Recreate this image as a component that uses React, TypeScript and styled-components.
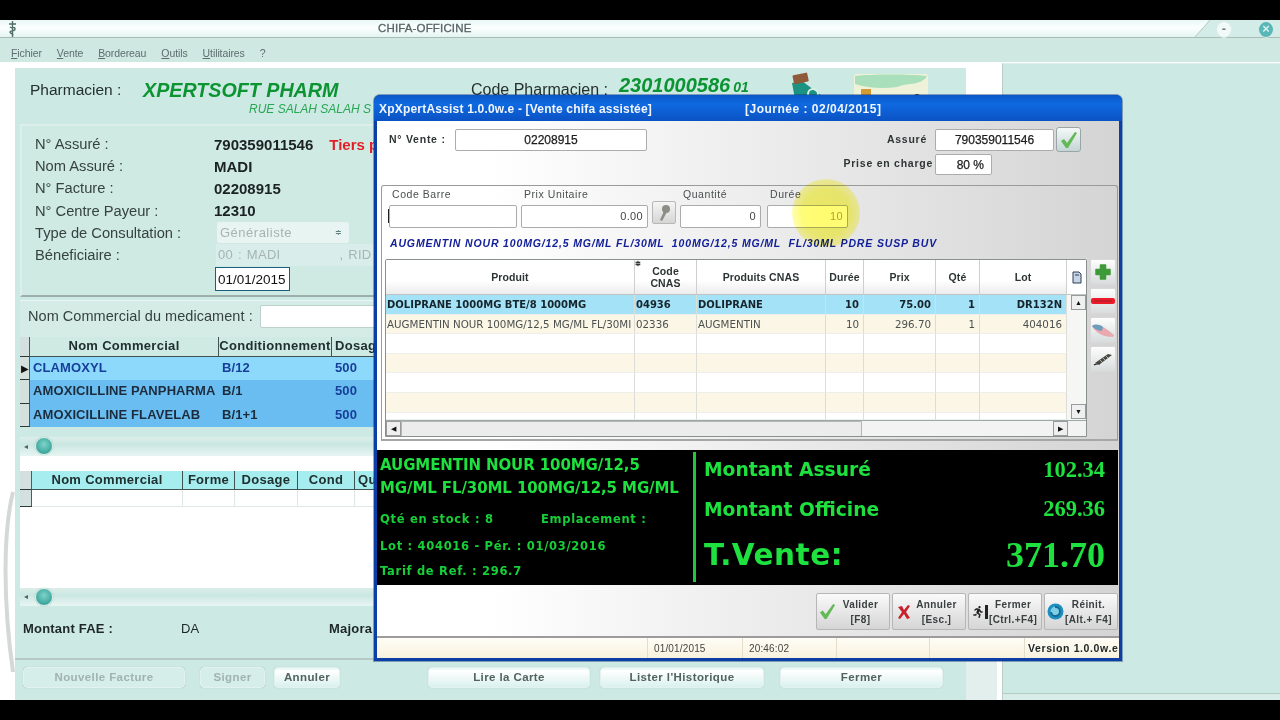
import React from "react";
import styled, { createGlobalStyle } from "styled-components";
import { FaRunning } from "react-icons/fa";

const Global = createGlobalStyle`
  html, body { margin: 0; padding: 0; background: #000; }
  body { width: 1280px; height: 720px; overflow: hidden; font-family: "Liberation Sans", Arial, sans-serif; }
  #root { width: 1280px; height: 720px; }
`;

const Screen = styled.div`
  width: 1280px; height: 720px; background: #000; padding: 20px 0; box-sizing: border-box;
  position: relative; overflow: hidden; filter: blur(0.35px);
`;
const AppWindow = styled.div`
  height: 680px; display: flex; flex-direction: column; background: #cde9e4;
`;
const TitleBar = styled.div`
  height: 18px; flex: none; display: flex; align-items: center; position: relative; box-sizing: border-box;
  background: linear-gradient(#eaf8f5, #fbfffe 45%, #e4f5f1);
  border-bottom: 1px solid #a9bcb8; padding-left: 8px;
`;
const AppTitle = styled.div`
  position: absolute; left: 378px; top: 2px; font-size: 11.5px; letter-spacing: 0.15px; color: #566464; font-weight: 400;
  -webkit-text-stroke: 0.3px #566464;
`;
const TitleCorner = styled.svg`position: absolute; right: 0; top: 0;`;
const WinControl = styled.div<{ $left: number; $tone: string; $ink: string }>`
  position: absolute; left: ${(p) => p.$left}px; top: 1px; width: 16px; height: 17px; border-radius: 50%;
  background: ${(p) => p.$tone}; border: 1px solid #d9ece8; box-sizing: border-box; color: ${(p) => p.$ink};
  font: 700 13px/14px "Liberation Sans", sans-serif; text-align: center;
`;
const MenuBar = styled.div`
  height: 24px; flex: none; display: flex; gap: 15px; align-items: center; padding: 6px 0 0 11px; box-sizing: border-box;
  background: #cfe8e2;
`;
const MenuItem = styled.span`
  font-size: 10.5px; color: #5e6d70; letter-spacing: -0.1px;
  &::first-letter { text-decoration: underline; }
`;
const Workspace = styled.div`
  flex: 1; display: flex; background: #fff; min-height: 0; position: relative;
`;
const LeftGutter = styled.div`width: 15px; flex: none; background: #fff; position: relative;`;
const Sweep = styled.svg`position: absolute; left: 0; top: 420px;`;
const MainColumn = styled.div`
  width: 951px; flex: none; padding-top: 6px; display: flex; flex-direction: column; box-sizing: border-box;
  background: linear-gradient(#fff 6px, #cde9e4 6px);
`;
const MidGutter = styled.div`
  width: 36px; flex: none; box-sizing: border-box; border-right: 5px solid #fff;
  background: linear-gradient(#fff 596px, #e2efec 596px);
`;
const RightPanel = styled.div`
  flex: 1; border-left: 1px solid #b9cdc9; border-top: 1px solid #dcefeb; margin-top: 1px;
  background: linear-gradient(#cde9e4 629px, #b5c9c5 629px, #b5c9c5 630px, #d8ede8 630px);
`;
const PharmHeader = styled.div`
  height: 56px; flex: none; display: flex; position: relative; padding: 9px 0 0 15px; box-sizing: border-box;
`;
const PharmLabel = styled.div`font-size: 15.5px; color: #25302f; width: 113px; padding-top: 4px;`;
const PharmName = styled.div`font-size: 19.7px; font-weight: 700; font-style: italic; color: #0b9431; width: 328px; padding-top: 2px;`;
const CodeLabel = styled.div`font-size: 16px; color: #25302f; width: 148px; padding-top: 4px;`;
const CodeValue = styled.div`font-size: 20px; font-weight: 700; font-style: italic; color: #0b9431; white-space: nowrap; margin-top: -3px;`;
const CodeSmall = styled.span`font-size: 14px; margin-left: 3px;`;
const Address = styled.div`position: absolute; left: 234px; top: 34px; font-size: 12px; font-style: italic; color: #27a653;`;
const Logos = styled.svg`position: absolute; left: 760px; top: 3px;`;
const InfoBox = styled.div`
  height: 173px; flex: none; margin: 0 0 3px 5px; padding: 7px 0 0 13px; box-sizing: border-box;
  background: #cfe9e3; border-top: 2px solid #dcefeb; border-left: 2px solid #dcefeb; border-bottom: 2px solid #9eaeaa;
  display: grid; grid-template-columns: 179px 1fr; grid-auto-rows: 22.2px; align-items: center;
`;
const InfoLabel = styled.div`font-size: 14.7px; color: #36423f;`;
const InfoValue = styled.div`font-size: 15px; font-weight: 700; color: #1b2222; white-space: nowrap;`;
const Tiers = styled.span`color: #e21f26; margin-left: 16px;`;
const SelectBox = styled.div`
  width: 134px; height: 23px; background: #e7f4f1; border: 1px solid #d4e8e3; border-radius: 3px; box-sizing: border-box;
  font-size: 13px; letter-spacing: 0.5px; color: #a7b3b1; padding: 3px 0 0 3px; display: flex; justify-content: space-between; margin-left: 2px;
`;
const SelectArrow = styled.span`font-size: 8px; color: #60807c; padding: 3px 7px 0 0;`;
const DisabledField = styled.div`
  width: 300px; height: 22px; background: #d9eeea; box-sizing: border-box; font-size: 13px; color: #a6b4b2; margin-left: 2px;
  padding: 3px 0 0 2px; word-spacing: 1px; white-space: pre; letter-spacing: 0.3px;
`;
const DateField = styled.div`
  width: 75px; height: 24px; background: #fff; border: 1px solid #1d5f80; box-sizing: border-box; margin-left: 1px;
  font-size: 13.5px; color: #111; padding: 4px 0 0 2px; margin-top: 3px;
`;
const SearchBox = styled.div`
  height: 37px; flex: none; margin-left: 5px; display: flex; align-items: center; gap: 7px; padding: 0 0 6px 8px;
  background: #d4ebe6; border-top: 1px solid #eaf6f3; box-sizing: border-box;
`;
const SearchLabel = styled.div`font-size: 14.5px; color: #36423f; white-space: nowrap; letter-spacing: 0.05px;`;
const SearchInput = styled.div`width: 300px; height: 23px; background: #fff; border: 1px solid #bcd0cc; border-radius: 2px; box-sizing: border-box;`;
const DataGrid = styled.div<{ $cols: string }>`
  display: grid; grid-template-columns: ${(p) => p.$cols}; flex: none; margin-left: 5px; background: #fff;
`;
const Indicator = styled.div<{ $h: number }>`
  height: ${(p) => p.$h}px; background: #d3e0dd; border-bottom: 1px solid #2b3a38; border-right: 1px solid #4c5c5a; box-sizing: border-box;
  font-size: 10px; line-height: ${(p) => p.$h}px; color: #111; text-align: center;
`;
const GridHead = styled.div<{ $tone: string; $left?: boolean }>`
  height: ${(p) => (p.$tone === "#a6edf0" ? 19 : 20)}px; background: ${(p) => p.$tone}; border-right: 1px solid #405350; border-bottom: 1px solid #405350; box-sizing: border-box;
  font: 700 13px/18px "Liberation Sans", sans-serif; letter-spacing: 0.3px; color: #20302f; text-align: ${(p) => (p.$left ? "left" : "center")}; white-space: nowrap; overflow: hidden;
  padding-left: ${(p) => (p.$left ? 3 : 0)}px;
`;
const GridCell = styled.div<{ $tone: string; $ink: string }>`
  height: 23.3px; background: ${(p) => p.$tone}; box-sizing: border-box; padding: 2px 0 0 3px;
  font: 700 13px/18px "Liberation Sans", sans-serif; letter-spacing: 0.1px; color: ${(p) => p.$ink}; white-space: nowrap; overflow: hidden;
`;
const BlankCell = styled.div`height: 17px; background: #fff; border-right: 1px solid #dfe8e6; border-bottom: 1px solid #dfe8e6; box-sizing: border-box;`;
const Track = styled.div<{ $h: number; $mt: number }>`
  height: ${(p) => p.$h}px; margin: ${(p) => p.$mt}px 0 0 5px; flex: none; display: flex; align-items: center; padding-left: 4px; gap: 3px;
  background: linear-gradient(#dceee9, #cbe7e2 40%, #e7f5f2);
`;
const TrackArrow = styled.span`font-size: 8px; color: #52625f; width: 8px;`;
const Thumb = styled.div`
  width: 16px; height: 16px; border-radius: 50%; background: radial-gradient(circle at 50% 40%, #7ed3c9, #2f9d93 85%);
  border: 1px solid #d8eee9; box-shadow: 0 0 1px #6f8f8a;
`;
const WhiteSpacer = styled.div<{ $h: number }>`height: ${(p) => p.$h}px; background: #fff; margin-left: 5px; flex: none;`;
const TotalsRow = styled.div`
  height: 52px; flex: none; margin-left: 8px; display: flex; align-items: center; font-size: 13px; font-weight: 700; color: #1d2726; letter-spacing: 0.2px; padding-bottom: 6px; box-sizing: border-box;
`;
const TotalLabel = styled.span`width: 158px;`;
const TotalDa = styled.span`width: 148px; font-weight: 400;`;
const ActionBar = styled.div`
  flex: 1; border-top: 2px solid #b6c8c4; margin-top: 0; display: flex; align-items: flex-start; padding: 7px 0 0 8px; background: #cde9e4;
`;
const ActionButton = styled.div<{ $w: number; $ml: number; $off?: boolean }>`
  width: ${(p) => p.$w}px; height: 21px; margin-left: ${(p) => p.$ml}px; box-sizing: border-box; border-radius: 4px;
  background: linear-gradient(#e0f5f1, #fff 15%, #d9f1ed); border: 1px solid #e4f2ef; box-shadow: 0 0 1px #99b3ae;
  font: 700 11.5px/19px "Liberation Sans", sans-serif; letter-spacing: 0.4px; text-align: center;
  color: ${(p) => (p.$off ? "#9fb3b0" : "#51625f")};
  ${(p) => p.$off && "background: #d6eee9;"}
`;

/* dialog */
const Dialog = styled.div`
  position: absolute; left: 374px; top: 95px; width: 748px; height: 566px; display: flex; flex-direction: column;
  background: #0b3fa5; border-radius: 6px 6px 0 0; padding: 0 3px 3px; box-sizing: border-box; box-shadow: 0 0 0 1px rgba(10,40,110,.4);
`;
const DialogTitle = styled.div`
  height: 26px; flex: none; margin: 0 -3px; padding: 7px 0 0 5px; box-sizing: border-box; display: flex;
  background: linear-gradient(#0a57c8, #0f69e0 35%, #0a52c4); border-radius: 6px 6px 0 0;
  font: 700 12px/15px "Liberation Sans", sans-serif; letter-spacing: 0.2px; color: #f0f6ff; white-space: nowrap;
`;
const TitleMain = styled.span`width: 366px;`;
const TitleDay = styled.span`letter-spacing: 0.5px;`;
const DialogBody = styled.div`
  flex: 1; display: flex; flex-direction: column; min-height: 0; background: linear-gradient(90deg, #fff 0%, #fff 15%, #d4d4d4 100%);
`;
const TopForm = styled.div`
  height: 64px; flex: none; display: flex; justify-content: space-between; padding: 8px 35px 0 12px; box-sizing: border-box;
`;
const FieldLabelBold = styled.span`font: 700 10.5px/20px "Liberation Sans", sans-serif; letter-spacing: 0.75px; color: #2d3535; white-space: nowrap;`;
const VenteRow = styled.div`display: flex; gap: 7px; align-items: flex-start;`;
const VenteLabel = styled(FieldLabelBold)`width: 59px;`;
const AssureLabel = styled(FieldLabelBold)`padding-right: 6px;`;
const TextBox = styled.div<{ $w: number; $h?: number; $align?: string; $ink?: string; $bg?: string }>`
  width: ${(p) => p.$w}px; height: ${(p) => p.$h ?? 22}px; flex: none; box-sizing: border-box; border: 1px solid #a9adad; border-radius: 2px;
  background: ${(p) => p.$bg ?? "#fff"}; color: ${(p) => p.$ink ?? "#1a1a1a"};
  font: 400 12px/20px "Liberation Sans", sans-serif; -webkit-text-stroke: 0.25px #222; text-align: ${(p) => p.$align ?? "center"}; padding: 0 7px;
`;
const InsuredGrid = styled.div`display: grid; grid-template-columns: auto 119px 28px; grid-auto-rows: 24px; column-gap: 2px; justify-items: end; align-items: start;`;
const CheckBtn = styled.div`
  width: 25px; height: 25px; margin-top: -2px; box-sizing: border-box; border: 1px solid #9aa5a5; border-radius: 3px; justify-self: start;
  background: linear-gradient(#f4f8f8, #c5d5d5); display: flex; align-items: center; justify-content: center;
`;
const ChargeBox = styled(TextBox)`justify-self: start; margin-top: 1px;`;
const GroupBox = styled.div`
  height: 256px; flex: none; margin-left: 4px; margin-right: 1px; border: 1px solid #9a9a9a; border-radius: 3px 3px 0 0; box-sizing: border-box;
  padding: 2px 0 0 3px; display: flex; flex-direction: column; border-bottom: 2px solid #a6a6a6;
`;
const EntryRow = styled.div`display: flex; padding-left: 4px; height: 41px; flex: none;`;
const EntryField = styled.div<{ $w: number; $ml: number }>`width: ${(p) => p.$w}px; margin-left: ${(p) => p.$ml}px; flex: none; display: flex; flex-direction: column;`;
const EntryLabel = styled.div`font: 400 10.5px/13px "Liberation Sans", sans-serif; letter-spacing: 0.55px; color: #4a4f4f; padding: 0 0 4px 3px; height: 13px;`;
const EntryInput = styled.div<{ $ink?: string }>`
  height: 23px; box-sizing: border-box; border: 1px solid #a8acac; border-radius: 2px; background: #fff; text-align: right; padding-right: 4px;
  font: 400 11px/21px "Liberation Sans", sans-serif; letter-spacing: 0.35px; color: ${(p) => p.$ink ?? "#444"};
`;
const Caret = styled.div`width: 1px; height: 14px; background: #222; margin: 3px 0 0 -2px;`;
const KeyBtn = styled.div`
  width: 24px; height: 23px; margin: 13px 0 0 4px; flex: none; box-sizing: border-box; border: 1px solid #b8b8b8; border-radius: 2px;
  background: linear-gradient(#f5f5f5, #d5d5d5); display: flex; align-items: center; justify-content: center;
`;
const Highlight = styled.div`
  position: absolute; left: 792px; top: 179px; width: 68px; height: 68px; border-radius: 50%; mix-blend-mode: multiply;
  background: radial-gradient(circle, rgb(255,252,110) 0%, rgb(255,252,120) 50%, rgb(255,255,255) 100%); pointer-events: none;
`;
const BlueLine = styled.div`
  font: italic 700 10.5px/14px "Liberation Sans", sans-serif; letter-spacing: 0.85px; color: #13209a; padding: 7px 0 0 5px; height: 30px; box-sizing: border-box; white-space: pre; flex: none;
`;
const TableArea = styled.div`display: flex; gap: 3px; height: 179px; flex: none;`;
const Table = styled.div`
  width: 702px; height: 178px; border: 1px solid #8a8f8f; border-radius: 2px 2px 0 0; box-sizing: border-box; background: #fff; display: flex; flex-direction: column; overflow: hidden; flex: none;
`;
const TableMain = styled.div`display: flex; height: 160px; flex: none;`;
const TableGrid = styled.div`
  display: grid; grid-template-columns: 249px 62px 129px 38px 72px 44px 87px; grid-template-rows: 35px repeat(6, 19.6px) 1fr; width: 681px; flex: none;
`;
const HeadCell = styled.div`
  border-right: 1px solid #cfcfcf; border-bottom: 1px solid #bfc5c5; box-sizing: border-box; background: linear-gradient(#fff 60%, #ececec);
  display: flex; align-items: center; justify-content: center; text-align: center; position: relative; padding: 0 1px;
  font: 700 10.5px/12px "Liberation Sans", sans-serif; letter-spacing: 0.1px; color: #2c3434;
`;
const SortMark = styled.span`position: absolute; left: 0; top: 0; font-size: 7px; line-height: 7px; color: #333;`;
const Cell = styled.div<{ $bg: string; $bold?: boolean; $right?: boolean }>`
  background: ${(p) => p.$bg}; border-right: 1px solid #dcdcd8; border-bottom: 1px solid #eeeeea; box-sizing: border-box; overflow: hidden; white-space: nowrap;
  font: ${(p) => (p.$bold ? "700 10px" : "400 10.3px")}/19.6px "DejaVu Sans", sans-serif; color: ${(p) => (p.$bold ? "#16242b" : "#4c5150")};
  text-align: ${(p) => (p.$right ? "right" : "left")}; padding: 0 ${(p) => (p.$right ? 4 : 0)}px 0 1px;
`;
const VBar = styled.div`flex: 1; display: flex; flex-direction: column; background: #f6f6f4; min-width: 0;`;
const VHead = styled.div`height: 35px; flex: none; background: #fff; display: flex; align-items: center; justify-content: center; border-bottom: 1px solid #bfc5c5; box-sizing: border-box;`;
const VTrack = styled.div`flex: 1; display: flex; flex-direction: column; justify-content: space-between; padding: 0 0 1px 4px;`;
const ArrowBtn = styled.div`
  width: 15px; height: 15px; box-sizing: border-box; border: 1px solid #9a9a9a; background: #efefef; font-size: 7px; line-height: 13px; text-align: center; color: #111; flex: none;
`;
const HBar = styled.div`height: 17px; flex: none; display: flex; background: #f3f3f3; border-top: 1px solid #9aa; box-sizing: border-box;`;
const HThumb = styled.div`width: 461px; flex: none; background: #ececec; border: 1px solid #b5b5b5; border-radius: 0 0 2px 0; box-sizing: border-box;`;
const HRest = styled.div`flex: 1;`;
const HEndSpace = styled.div`width: 18px; flex: none;`;
const SideTools = styled.div`display: flex; flex-direction: column; gap: 3px; flex: none;`;
const ToolBtn = styled.div`
  width: 26px; height: 26px; box-sizing: border-box; border: 1px solid #d8d8d8; border-radius: 2px; background: linear-gradient(#fdfdfd, #d8dcdc);
  display: flex; align-items: center; justify-content: center;
`;
const BlackPanel = styled.div`
  height: 135px; flex: none; margin-top: 9px; background: #000; display: flex; margin-right: 1px; color: #1ee03e;
`;
const ProductCol = styled.div`width: 316px; flex: none; padding: 4px 0 0 3px; box-sizing: border-box; display: flex; flex-direction: column;`;
const ProductLine = styled.div`font: 700 15px/23px "DejaVu Sans", sans-serif; letter-spacing: -0.1px; white-space: nowrap; height: 23px;`;
const StockLine = styled.div<{ $h: number; $mt?: number }>`
  font: 700 11.5px/14px "DejaVu Sans", sans-serif; letter-spacing: 0.7px; white-space: nowrap; color: #17cf38;
  height: ${(p) => p.$h}px; margin-top: ${(p) => p.$mt ?? 0}px; padding-top: 6px; box-sizing: border-box; display: flex;
`;
const StockPart = styled.span`width: 161px; flex: none;`;
const Divider = styled.div`width: 3px; margin: 2px 0 3px; background: #1bc93a; flex: none;`;
const TotalsCol = styled.div`flex: 1; padding: 0 13px 0 8px; box-sizing: border-box; display: flex; flex-direction: column;`;
const AmountRow = styled.div<{ $h: number }>`height: ${(p) => p.$h}px; display: flex; justify-content: space-between; align-items: center; flex: none;`;
const AmountLabel = styled.span<{ $big?: boolean }>`font: 700 ${(p) => (p.$big ? 29.5 : 18.7)}px "DejaVu Sans", sans-serif; letter-spacing: ${(p) => (p.$big ? 0.5 : 0)}px;`;
const AmountValue = styled.span<{ $big?: boolean }>`font: 700 ${(p) => (p.$big ? 36 : 22.5)}px "Liberation Serif", serif;`;
const Footer = styled.div`height: 53px; flex: none; display: flex; justify-content: flex-end; gap: 2px; padding: 8px 1px 0 0; box-sizing: border-box; border-bottom: 2px solid #9c9c9c;`;
const CmdBtn = styled.div`
  width: 74px; height: 37px; box-sizing: border-box; border: 1px solid #b6b6b6; border-radius: 2px; background: linear-gradient(#fafafa, #d5d5d5);
  display: flex; align-items: center; padding-left: 1px;
`;
const CmdIcon = styled.div`width: 19px; flex: none; display: flex; justify-content: center; align-items: center;`;
const CmdText = styled.div`flex: 1; text-align: center; padding-right: 5px; font: 700 10px/15px "Liberation Sans", sans-serif; letter-spacing: 0.4px; color: #3a4040; white-space: nowrap;`;
const StatusBar = styled.div`flex: 1; min-height: 0; display: flex; background: linear-gradient(#fffdf6, #f8f1de); font: 400 10px/21px "Liberation Sans", sans-serif; color: #444; letter-spacing: 0.15px;`;
const StatusCell = styled.div<{ $w: number; $bold?: boolean }>`
  width: ${(p) => p.$w}px; flex: none; border-right: 1px solid #e3ddcb; box-sizing: border-box; padding-left: 6px; white-space: nowrap; overflow: hidden;
  ${(p) => p.$bold && "font-weight:700; font-size: 10.5px; color:#20282a; letter-spacing: .6px; border-right: 0; padding-left: 3px;"}
`;

const grid1 = [
  { n: "CLAMOXYL", c: "B/12", d: "500", tone: "#8cd9fb", ink: "#173f9a", mark: "▶" },
  { n: "AMOXICILLINE PANPHARMA", c: "B/1", d: "500", tone: "#69bdf0", ink: "#1c2c3c", mark: "" },
  { n: "AMOXICILLINE FLAVELAB", c: "B/1+1", d: "500", tone: "#69bdf0", ink: "#1c2c3c", mark: "" },
];
const heads = ["Produit", "Code\nCNAS", "Produits CNAS", "Durée", "Prix", "Qté", "Lot"];
const blank = ["", "", "", "", "", "", ""];
const rows: string[][] = [
  ["DOLIPRANE 1000MG BTE/8 1000MG", "04936", "DOLIPRANE", "10", "75.00", "1", "DR132N"],
  ["AUGMENTIN NOUR 100MG/12,5 MG/ML FL/30MI", "02336", "AUGMENTIN", "10", "296.70", "1", "404016"],
  blank, blank, blank, blank, blank,
];

const Check = ({ size = 18 }: { size?: number }) => (
  <svg width={size} height={size} viewBox="0 0 18 18"><path d="M1 10l3-2 3 4 8-11 2 1L8 17H6z" fill="#62b955" /></svg>
);

export default function App() {
  return (
    <Screen>
      <Global />
      <AppWindow>
        <TitleBar>
          <svg width="9" height="16" viewBox="0 0 9 16"><path d="M4.500 0v16M1 3h7M2 6c3 2 5-1 5 2s-5 1-5 3 3 1 3 3" stroke="#4f6f66" strokeWidth="1.400" fill="none" /></svg>
          <AppTitle>CHIFA-OFFICINE</AppTitle>
          <TitleCorner width="85" height="17" viewBox="0 0 85 17">
            <path d="M0 17L15 0h70v17z" fill="#d4ece7" />
            <path d="M0 17L15 0" stroke="#b5c8c4" fill="none" />
          </TitleCorner>
          <WinControl $left={1216} $tone="#f2faf8" $ink="#778">-</WinControl>
          <WinControl $left={1258} $tone="#59b7b7" $ink="#d8f2ee">×</WinControl>
        </TitleBar>
        <MenuBar>
          {["Fichier", "Vente", "Bordereau", "Outils", "Utilitaires", "?"].map((m) => <MenuItem key={m}>{m}</MenuItem>)}
        </MenuBar>
        <Workspace>
          <LeftGutter>
            <Sweep width="15" height="200" viewBox="0 0 15 200"><path d="M13 10C3 50 3 120 13 190" stroke="#d4d8d8" strokeWidth="4" fill="none" /></Sweep>
          </LeftGutter>
          <MainColumn>
            <PharmHeader>
              <PharmLabel>Pharmacien :</PharmLabel>
              <PharmName>XPERTSOFT PHARM</PharmName>
              <CodeLabel>Code Pharmacien :</CodeLabel>
              <CodeValue>2301000586<CodeSmall>01</CodeSmall></CodeValue>
              <Address>RUE SALAH SALAH S</Address>
              <Logos width="160" height="28" viewBox="0 0 160 28">
                <path d="M17 12l10-2 16 12 8 6H20z" fill="#1c9382" />
                <rect x="18" y="3" width="15" height="9" rx="1" fill="#8f5a3a" transform="rotate(-12 25 7)" />
                <circle cx="38" cy="23" r="5" fill="none" stroke="#d8f0e4" strokeWidth="2" />
                <rect x="79" y="3" width="74" height="25" rx="3" fill="#eef2d8" />
                <path d="M80 5c15-2 55-2 72 0-6 10-18 6-30 11-14 2-30 1-42-3z" fill="#a9dfba" />
                <rect x="86" y="18" width="10" height="10" fill="#d79b36" />
                <circle cx="142" cy="26" r="3" fill="#333" />
              </Logos>
            </PharmHeader>
            <InfoBox>
              <InfoLabel>N° Assuré :</InfoLabel><InfoValue>790359011546<Tiers>Tiers p</Tiers></InfoValue>
              <InfoLabel>Nom Assuré :</InfoLabel><InfoValue>MADI</InfoValue>
              <InfoLabel>N° Facture :</InfoLabel><InfoValue>02208915</InfoValue>
              <InfoLabel>N° Centre Payeur :</InfoLabel><InfoValue>12310</InfoValue>
              <InfoLabel>Type de Consultation :</InfoLabel>
              <SelectBox>Généraliste<SelectArrow>≑</SelectArrow></SelectBox>
              <InfoLabel>Béneficiaire :</InfoLabel><DisabledField>{"00 : MADI            , RID"}</DisabledField>
              <span /><DateField>01/01/2015</DateField>
            </InfoBox>
            <SearchBox>
              <SearchLabel>Nom Commercial du medicament :</SearchLabel>
              <SearchInput />
            </SearchBox>
            <DataGrid $cols="10px 189px 113px 1fr">
              <Indicator $h={20} />
              <GridHead $tone="#cfe9e3">Nom Commercial</GridHead>
              <GridHead $tone="#cfe9e3">Conditionnement</GridHead>
              <GridHead $tone="#cfe9e3" $left>Dosag</GridHead>
              {grid1.map((r) => (
                <React.Fragment key={r.n}>
                  <Indicator $h={23.3}>{r.mark}</Indicator>
                  <GridCell $tone={r.tone} $ink={r.ink}>{r.n}</GridCell>
                  <GridCell $tone={r.tone} $ink={r.ink}>{r.c}</GridCell>
                  <GridCell $tone={r.tone} $ink="#173f9a">{r.d}</GridCell>
                </React.Fragment>
              ))}
            </DataGrid>
            <Track $h={19} $mt={10}><TrackArrow>◂</TrackArrow><Thumb /></Track>
            <WhiteSpacer $h={15} />
            <DataGrid $cols="12px 151px 52px 63px 57px 1fr">
              <Indicator $h={19} />
              <GridHead $tone="#a6edf0">Nom Commercial</GridHead>
              <GridHead $tone="#a6edf0">Forme</GridHead>
              <GridHead $tone="#a6edf0">Dosage</GridHead>
              <GridHead $tone="#a6edf0">Cond</GridHead>
              <GridHead $tone="#a6edf0" $left>Qu</GridHead>
              <Indicator $h={17} /><BlankCell /><BlankCell /><BlankCell /><BlankCell /><BlankCell />
            </DataGrid>
            <WhiteSpacer $h={81} />
            <Track $h={18} $mt={0}><TrackArrow>◂</TrackArrow><Thumb /></Track>
            <TotalsRow>
              <TotalLabel>Montant FAE :</TotalLabel>
              <TotalDa>DA</TotalDa>
              <span>Majora</span>
            </TotalsRow>
            <ActionBar>
              <ActionButton $w={162} $ml={0} $off>Nouvelle Facture</ActionButton>
              <ActionButton $w={65} $ml={15} $off>Signer</ActionButton>
              <ActionButton $w={66} $ml={9}>Annuler</ActionButton>
              <ActionButton $w={162} $ml={88}>Lire la Carte</ActionButton>
              <ActionButton $w={164} $ml={10}>Lister l'Historique</ActionButton>
              <ActionButton $w={163} $ml={16}>Fermer</ActionButton>
            </ActionBar>
          </MainColumn>
          <MidGutter />
          <RightPanel />
        </Workspace>
      </AppWindow>

      <Dialog>
        <DialogTitle>
          <TitleMain>XpXpertAssist 1.0.0w.e - [Vente chifa assistée]</TitleMain>
          <TitleDay>[Journée : 02/04/2015]</TitleDay>
        </DialogTitle>
        <DialogBody>
          <TopForm>
            <VenteRow>
              <VenteLabel>N° Vente :</VenteLabel>
              <TextBox $w={192}>02208915</TextBox>
            </VenteRow>
            <InsuredGrid>
              <AssureLabel>Assuré</AssureLabel>
              <TextBox $w={119}>790359011546</TextBox>
              <CheckBtn><Check /></CheckBtn>
              <FieldLabelBold>Prise en charge</FieldLabelBold>
              <ChargeBox $w={57} $h={21} $align="right">80 %</ChargeBox>
              <span />
            </InsuredGrid>
          </TopForm>
          <GroupBox>
            <EntryRow>
              <EntryField $w={128} $ml={0}><EntryLabel>Code Barre</EntryLabel><EntryInput><Caret /></EntryInput></EntryField>
              <EntryField $w={127} $ml={4}><EntryLabel>Prix Unitaire</EntryLabel><EntryInput>0.00</EntryInput></EntryField>
              <KeyBtn>
                <svg width="14" height="18" viewBox="0 0 14 18"><circle cx="9" cy="5" r="4" fill="#8d8d85" /><path d="M7 7L3 16l2 1 5-9z" fill="#8d8d85" /></svg>
              </KeyBtn>
              <EntryField $w={81} $ml={4}><EntryLabel>Quantité</EntryLabel><EntryInput>0</EntryInput></EntryField>
              <EntryField $w={81} $ml={6}><EntryLabel>Durée</EntryLabel><EntryInput $ink="#aaa866">10</EntryInput></EntryField>
            </EntryRow>
            <BlueLine>{"AUGMENTIN NOUR 100MG/12,5 MG/ML FL/30ML  100MG/12,5 MG/ML  FL/30ML PDRE SUSP BUV"}</BlueLine>
            <TableArea>
              <Table>
                <TableMain>
                  <TableGrid>
                    {heads.map((h, i) => (
                      <HeadCell key={h}>
                        {i === 1 && <SortMark>≑</SortMark>}
                        {i === 1 ? <>Code<br />CNAS</> : h}
                      </HeadCell>
                    ))}
                    {rows.flatMap((r, ri) =>
                      r.map((c, ci) => (
                        <Cell key={`${ri}-${ci}`} $bg={ri === 0 ? "#a3e2f7" : ri % 2 === 1 ? "#fbf6e6" : "#fff"} $bold={ri === 0} $right={ci > 2}>{c}</Cell>
                      ))
                    )}
                  </TableGrid>
                  <VBar>
                    <VHead>
                      <svg width="10" height="13" viewBox="0 0 10 13"><path d="M1 1h6l2 2v9H1z" fill="#c6d5e4" stroke="#2c3d55" /><path d="M3 4h4" stroke="#2c3d55" /></svg>
                    </VHead>
                    <VTrack><ArrowBtn>▲</ArrowBtn><ArrowBtn>▼</ArrowBtn></VTrack>
                  </VBar>
                </TableMain>
                <HBar>
                  <ArrowBtn>◀</ArrowBtn>
                  <HThumb />
                  <HRest />
                  <ArrowBtn>▶</ArrowBtn>
                  <HEndSpace />
                </HBar>
              </Table>
              <SideTools>
                <ToolBtn><svg width="18" height="18" viewBox="0 0 18 18"><path d="M6.500 2h5v4.500H16v5h-4.500V16h-5v-4.500H2v-5h4.500z" fill="#3f9a3a" stroke="#3f9a3a" strokeWidth="1.500" strokeLinejoin="round" /></svg></ToolBtn>
                <ToolBtn><svg width="24" height="8" viewBox="0 0 24 8"><rect x="0" y="1" width="24" height="6" rx="2" fill="#ea1c2c" /><rect x="3" y="3" width="18" height="2" fill="#a81c24" opacity=".5" /></svg></ToolBtn>
                <ToolBtn><svg width="24" height="20" viewBox="0 0 24 20"><path d="M1 6c5-3 12 0 22 9l-1 2C14 17 5 14 1 6z" fill="#e8aab0" /><path d="M1 6c3-2 7-2 11 1 0 2-1 3-2 4-4-1-7-2-9-5z" fill="#6f9dbd" /></svg></ToolBtn>
                <ToolBtn><svg width="20" height="14" viewBox="0 0 20 14"><path d="M2 11L15 2l4 1L7 12z" fill="#4a4a44" /><path d="M1 13c3-2 4-1 6-1" stroke="#222" strokeWidth="1.200" fill="none" /><path d="M7 8l3 3M10 6l3 3M13 4l3 3" stroke="#ddd" strokeWidth=".7" /></svg></ToolBtn>
              </SideTools>
            </TableArea>
          </GroupBox>
          <BlackPanel>
            <ProductCol>
              <ProductLine>AUGMENTIN NOUR 100MG/12,5</ProductLine>
              <ProductLine>MG/ML FL/30ML 100MG/12,5 MG/ML</ProductLine>
              <StockLine $h={27} $mt={6}><StockPart>Qté en stock : 8</StockPart><span>Emplacement :</span></StockLine>
              <StockLine $h={25}>Lot : 404016 - Pér. : 01/03/2016</StockLine>
              <StockLine $h={25}>Tarif de Ref. : 296.7</StockLine>
            </ProductCol>
            <Divider />
            <TotalsCol>
              <AmountRow $h={39}><AmountLabel>Montant Assuré</AmountLabel><AmountValue>102.34</AmountValue></AmountRow>
              <AmountRow $h={40}><AmountLabel>Montant Officine</AmountLabel><AmountValue>269.36</AmountValue></AmountRow>
              <AmountRow $h={52}><AmountLabel $big>T.Vente:</AmountLabel><AmountValue $big>371.70</AmountValue></AmountRow>
            </TotalsCol>
          </BlackPanel>
          <Footer>
            <CmdBtn><CmdIcon><Check size={17} /></CmdIcon><CmdText>Valider<br />[F8]</CmdText></CmdBtn>
            <CmdBtn><CmdIcon><svg width="14" height="16" viewBox="0 0 14 16"><path d="M1 3l4-1 2 4 4-5 2 1-4 6 4 6-3 1-3-5-4 5-2-1 4-6z" fill="#c9202c" /></svg></CmdIcon><CmdText>Annuler<br />[Esc.]</CmdText></CmdBtn>
            <CmdBtn><CmdIcon><FaRunning size={12} color="#222" /><svg width="4" height="14" viewBox="0 0 4 14"><rect x="1" width="3" height="14" fill="#222" /></svg></CmdIcon><CmdText>Fermer<br />[Ctrl.+F4]</CmdText></CmdBtn>
            <CmdBtn><CmdIcon><svg width="17" height="17" viewBox="0 0 17 17"><circle cx="8.500" cy="8.500" r="8" fill="#1c8fc0" /><circle cx="8.500" cy="8.500" r="5" fill="#7ecfe6" /><path d="M4 9a4.500 4.500 0 1 0 4-5" stroke="#136a94" strokeWidth="2" fill="none" /></svg></CmdIcon><CmdText>Réinit.<br />[Alt.+ F4]</CmdText></CmdBtn>
          </Footer>
          <StatusBar>
            <StatusCell $w={271} />
            <StatusCell $w={95}>01/01/2015</StatusCell>
            <StatusCell $w={94}>20:46:02</StatusCell>
            <StatusCell $w={93} />
            <StatusCell $w={95} />
            <StatusCell $w={94} $bold>Version 1.0.0w.e</StatusCell>
          </StatusBar>
        </DialogBody>
      </Dialog>
      <Highlight />
    </Screen>
  );
}
